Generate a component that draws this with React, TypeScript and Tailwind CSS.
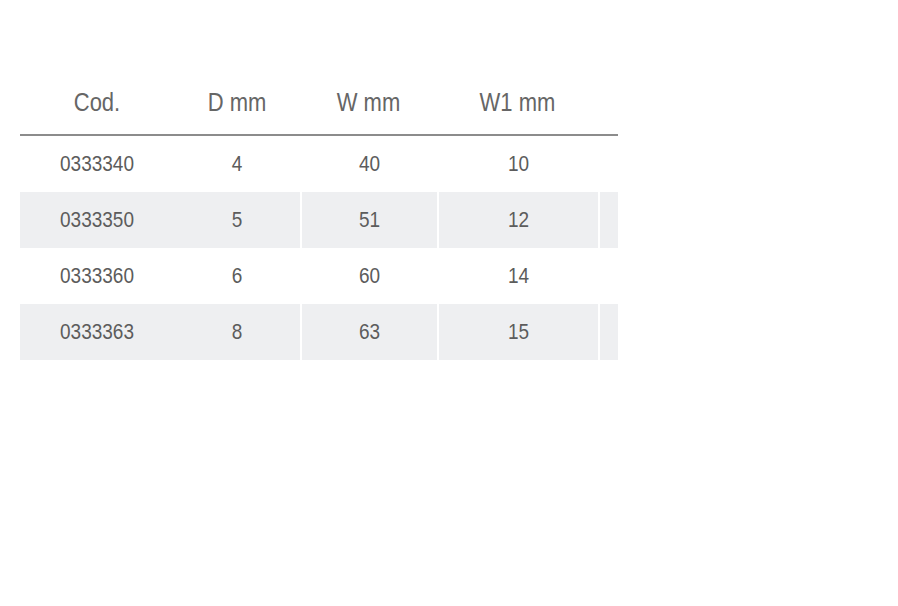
const rows = [
  { cod: "0333340", d: "4", w: "40", w1: "10" },
  { cod: "0333350", d: "5", w: "51", w1: "12" },
  { cod: "0333360", d: "6", w: "60", w1: "14" },
  { cod: "0333363", d: "8", w: "63", w1: "15" },
];

const cols = "grid grid-cols-[154px_126px_137px_161px_20px]";

function T({ children }: { children: React.ReactNode }) {
  return <span className="inline-block scale-y-[1.18]">{children}</span>;
}

export default function App() {
  return (
    <div className="min-h-screen bg-white pl-5 pt-[70px] font-['Liberation_Sans',Arial,sans-serif] text-[#5c5c5c]">
      <div className="w-[598px]">
        {/* intestazione */}
        <div className={`${cols} h-[66px] items-center border-b-2 border-[#8c8c8c] text-center text-[22px] text-[#666]`}>
          <div><T>Cod.</T></div>
          <div><T>D mm</T></div>
          <div><T>W mm</T></div>
          <div><T>W1 mm</T></div>
          <div />
        </div>

        {rows.map((r, i) => (
          <div
            key={r.cod}
            className={`${cols} h-14 text-center text-[19px] ${i % 2 === 1 ? "bg-[#eeeff1]" : "bg-white"}`}
          >
            <div className="flex items-center justify-center"><T>{r.cod}</T></div>
            <div className="flex items-center justify-center"><T>{r.d}</T></div>
            <div className="flex items-center justify-center border-l-2 border-white"><T>{r.w}</T></div>
            <div className="flex items-center justify-center border-l-2 border-white"><T>{r.w1}</T></div>
            <div className="border-l-2 border-white" />
          </div>
        ))}
      </div>
    </div>
  );
}
